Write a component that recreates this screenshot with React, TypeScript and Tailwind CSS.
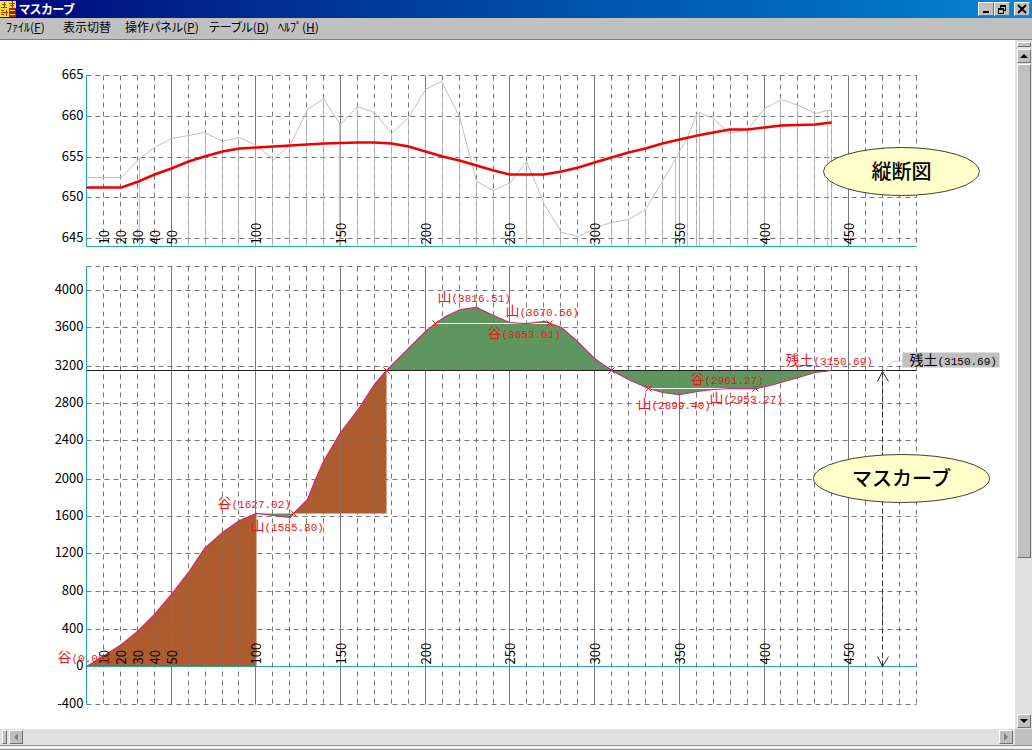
import type { ReactNode } from "react";

type Point = [number, number];

interface Mark {
    x: number;
    y: number;
    kanji: string;
    value: string;
}

const MENUS = [
    { label: "ﾌｧｲﾙ", accessKey: "F" },
    { label: "表示切替", accessKey: "" },
    { label: "操作パネル", accessKey: "P" },
    { label: "テーブル", accessKey: "D" },
    { label: "ﾍﾙﾌﾟ", accessKey: "H" },
];

// Plot area shared by both charts
const LEFT = 86;
const RIGHT = 916;
const PROFILE = { top: 75, bottom: 246 };
const MASS = { top: 266, bottom: 704, zero: 666 };

const stationX = (station: number) => Math.round(LEFT + (station * (RIGHT - LEFT)) / 490);

const STATIONS = Array.from({ length: 49 }, (_, i) => (i + 1) * 10);
const STATION_LABELS = [10, 20, 30, 40, 50, 100, 150, 200, 250, 300, 350, 400, 450];

const ELEVATIONS: Point[] = [[665, 75], [660, 116], [655, 157], [650, 197], [645, 238]];

const VOLUMES: Point[] = [
    [4000, 290], [3600, 327], [3200, 366], [2800, 403], [2400, 440], [2000, 479],
    [1600, 516], [1200, 553], [800, 591], [400, 629], [0, 666], [-400, 704],
];

const GROUND: Point[] = [
    [86, 177], [121, 177], [138, 159], [154, 147], [171, 138], [188, 135], [204, 132], [222, 141],
    [239, 137], [256, 145], [273, 159], [290, 144], [307, 109], [323, 98], [340, 124], [357, 106],
    [374, 112], [391, 133], [408, 117], [425, 89], [441, 81], [459, 116], [476, 181], [493, 190],
    [510, 182], [526, 161], [544, 204], [561, 232], [578, 236], [595, 227], [611, 222], [628, 219],
    [645, 209], [676, 157], [679, 151], [687, 137], [696, 114], [699, 112], [713, 118], [729, 133],
    [747, 129], [764, 108], [781, 99], [798, 105], [815, 113], [827, 110], [831, 110],
];

const PLANNED: Point[] = [
    [86, 187], [121, 187], [138, 181], [154, 174], [171, 168], [188, 161], [204, 156], [222, 151],
    [239, 148], [256, 147], [273, 146], [290, 145], [323, 143], [357, 142], [374, 142], [391, 143],
    [408, 146], [425, 151], [442, 156], [459, 160], [476, 165], [493, 170], [509, 174], [543, 174],
    [561, 171], [578, 167], [594, 162], [611, 157], [628, 152], [645, 148], [662, 143], [679, 139],
    [697, 135], [713, 132], [729, 129], [747, 129], [764, 127], [781, 125], [815, 124], [831, 122],
];

// The mass curve, split where the balance line changes
const CURVE_A: Point[] = [
    [86, 666], [104, 655], [121, 644], [137, 631], [154, 614], [171, 594], [188, 572], [204, 548],
    [222, 532], [239, 520], [256, 513],
];
const CURVE_B: Point[] = [[256, 513], [273, 515], [290, 517], [293, 513]];
const CURVE_C: Point[] = [
    [293, 513], [307, 499], [315, 479], [323, 461], [340, 432], [357, 410], [374, 384], [386, 370],
];
const CURVE_D: Point[] = [
    [386, 370], [408, 348], [425, 331], [435, 323], [445, 316], [460, 309], [476, 307], [493, 315],
    [509, 322], [526, 323], [544, 321], [550, 323], [561, 327], [577, 341], [594, 358], [611, 370],
];
const CURVE_E: Point[] = [
    [611, 370], [628, 379], [648, 388], [662, 392], [679, 394], [697, 391], [713, 389], [729, 388],
    [755, 388], [770, 385], [798, 377], [815, 372], [831, 370],
];

const MARKS: Mark[] = [
    { x: 57, y: 661, kanji: "谷", value: "(0.00)" },
    { x: 217, y: 507, kanji: "谷", value: "(1627.02)" },
    { x: 250, y: 530, kanji: "山", value: "(1585.80)" },
    { x: 437, y: 301, kanji: "山", value: "(3816.51)" },
    { x: 505, y: 315, kanji: "山", value: "(3670.56)" },
    { x: 487, y: 337, kanji: "谷", value: "(3653.01)" },
    { x: 637, y: 408, kanji: "山", value: "(2899.40)" },
    { x: 709, y: 402, kanji: "山", value: "(2953.27)" },
    { x: 690, y: 383, kanji: "谷", value: "(2961.27)" },
    { x: 785, y: 364, kanji: "残土", value: "(3150.69)" },
];

const CROSSES: Point[] = [[293, 513], [386, 370], [435, 323], [549, 323], [611, 370], [648, 388], [755, 388]];

const toPoints = (points: Point[]) => points.map((p) => p.join(",")).join(" ");

// Ground height at any x, used for the survey drop lines
const groundAt = (x: number) => {
    const i = Math.max(1, GROUND.findIndex((p) => p[0] >= x));
    const [x0, y0] = GROUND[i - 1];
    const [x1, y1] = GROUND[i];
    return y0 + ((y1 - y0) * (x - x0)) / (x1 - x0);
};

const DROPS = [...STATIONS.filter((s) => s >= 60 && s <= 440).map(stationX), 139, 339, 675, 687, 699, 827];

function Grid({ top, bottom, rows }: { top: number; bottom: number; rows: number[] }) {
    return (
        <g stroke="#787878" strokeWidth={1}>
            {rows.map((y) => (
                <line key={y} x1={LEFT} x2={RIGHT} y1={y} y2={y} strokeDasharray="5 4" />
            ))}
            {STATIONS.map((s) => (
                <line
                    key={s}
                    x1={stationX(s)}
                    x2={stationX(s)}
                    y1={top}
                    y2={bottom}
                    strokeDasharray={s % 50 === 0 ? undefined : "5 4"}
                />
            ))}
        </g>
    );
}

function StationLabels({ y }: { y: number }) {
    return (
        <g className="fill-black text-[13px]">
            {STATION_LABELS.map((s) => (
                <text key={s} transform={`translate(${stationX(s) + 5} ${y}) rotate(-90)`}>
                    {s}
                </text>
            ))}
        </g>
    );
}

function ScaleLabels({ rows }: { rows: Point[] }) {
    return (
        <g className="fill-black text-[13px]" textAnchor="end">
            {rows.map(([value, y]) => (
                <text key={value} x={83} y={y + 3}>
                    {value}
                </text>
            ))}
        </g>
    );
}

function Callout({ cx, cy, rx, ry, children }: { cx: number; cy: number; rx: number; ry: number; children: ReactNode }) {
    return (
        <g>
            <ellipse cx={cx} cy={cy} rx={rx} ry={ry} fill="#ffffcc" stroke="#404030" />
            <text x={cx} y={cy + 7} textAnchor="middle" className="fill-black text-[20px] font-medium">
                {children}
            </text>
        </g>
    );
}

function ProfileChart() {
    return (
        <g>
            <Grid top={PROFILE.top} bottom={PROFILE.bottom} rows={ELEVATIONS.map((e) => e[1])} />
            <g stroke="#b0b0b0" strokeOpacity={0.8}>
                {DROPS.map((x) => (
                    <line key={x} x1={x} x2={x} y1={groundAt(x)} y2={PROFILE.bottom} />
                ))}
            </g>
            <polyline points={toPoints(GROUND)} fill="none" stroke="#c0c0c0" />
            <path d={`M${LEFT} ${PROFILE.top}V${PROFILE.bottom}H${RIGHT}`} fill="none" stroke="#20a8a8" />
            <polyline points={toPoints(PLANNED)} fill="none" stroke="#f00000" strokeWidth={2.5} />
            <ScaleLabels rows={ELEVATIONS} />
            <StationLabels y={244} />
        </g>
    );
}

function MassChart() {
    const rows = [MASS.top, ...VOLUMES.map((v) => v[1])];
    const haul = `M${toPoints(CURVE_A)} 256,666Z M${toPoints(CURVE_C)} 386,513Z`;
    const balance = `M${toPoints(CURVE_B)}Z M${toPoints(CURVE_D)}Z M${toPoints(CURVE_E)}Z`;

    return (
        <g>
            <clipPath id="filled">
                <path d={`${haul} ${balance}`} />
            </clipPath>
            <Grid top={MASS.top} bottom={MASS.bottom} rows={rows} />
            <path d={haul} fill="#ac5d30" />
            <path d={balance} fill="#5f9660" />
            <g clipPath="url(#filled)" opacity={0.4}>
                <Grid top={MASS.top} bottom={MASS.bottom} rows={rows} />
            </g>
            <path d={`M${LEFT} ${MASS.top}V${MASS.bottom}M${LEFT} ${MASS.zero}H${RIGHT}`} fill="none" stroke="#20a8a8" />
            <path d={`M${LEFT} 370H${RIGHT}`} stroke="#202020" />
            <path d="M435 323H549M648 388H755" stroke="#ffffff" strokeWidth={1} />
            <polyline
                points={toPoints([...CURVE_A, ...CURVE_B, ...CURVE_C, ...CURVE_D, ...CURVE_E])}
                fill="none"
                stroke="#d02c70"
                strokeWidth={1.25}
            />
            <g stroke="#e02020" fill="none">
                {CROSSES.map(([x, y]) => (
                    <path key={x} d={`M${x - 3} ${y - 3}l6 6m0 -6l-6 6`} />
                ))}
            </g>
            <ScaleLabels rows={VOLUMES} />
            <StationLabels y={664} />
            <g className="fill-[#e81818]">
                {MARKS.map((m) => (
                    <ValueText key={`${m.x}-${m.y}`} {...m} />
                ))}
            </g>

            {/* Surplus soil, measured from the zero line */}
            <path d="M884 371L892 361L903 360" fill="none" stroke="#c8c8c8" />
            <rect x={902} y={352} width={97} height={15} fill="#c0c0c0" />
            <g className="fill-black">
                <ValueText x={909} y={364} kanji="残土" value="(3150.69)" />
            </g>
            <path d="M882 372V666" stroke="#303030" strokeWidth={1} strokeDasharray="5 3" />
            <path d="M877 381L882 371L888 381M877 656L882 666L888 656" fill="none" stroke="#303030" />
        </g>
    );
}

function ValueText({ x, y, kanji, value }: Mark) {
    return (
        <text x={x} y={y}>
            <tspan className="text-[14px]">{kanji}</tspan>
            <tspan className="font-['Liberation_Mono',monospace] text-[11px]">{value}</tspan>
        </text>
    );
}

const RAISED = "border border-t-white border-l-white border-r-[#707070] border-b-[#707070] bg-[#c0c0c0]";

function BevelButton({ label, className = "", children }: { label: string; className?: string; children: ReactNode }) {
    return (
        <button type="button" aria-label={label} className={`flex shrink-0 items-center justify-center ${RAISED} ${className}`}>
            {children}
        </button>
    );
}

function Arrow({ d, className = "fill-black" }: { d: string; className?: string }) {
    return (
        <svg width="8" height="8" viewBox="0 0 8 8" className={className}>
            <path d={d} />
        </svg>
    );
}

function AppIcon() {
    return (
        <svg width="16" height="16" viewBox="0 0 16 16" className="shrink-0" shapeRendering="crispEdges">
            <rect width="16" height="16" fill="#f8e820" />
            <rect x="9" y="7" width="7" height="9" fill="#b01818" />
            <path d="M2 3.5h4M4 1v6M1 6.5h6M1 9.5h3M1 11.5h3M1 13.5h3M6 9v6M4 11.5h4M9 2.5h6M12 0v7M10 4.5h4" stroke="#c02818" />
            <path d="M10 9.5h5M10 13.5h5" stroke="#f8e820" />
        </svg>
    );
}

export default function App() {
    return (
        <div className="flex min-h-screen flex-col bg-[#c0c0c0] font-['Noto_Sans_CJK_JP',sans-serif] text-black">
            <header className="flex h-[18px] items-center gap-[3px] bg-linear-to-r from-[#00007c] to-[#1084d0] pr-0.5">
                <AppIcon />
                <h1 className="flex-1 text-[12px] leading-[18px] font-bold text-white [font-feature-settings:'palt']">
                    マスカーブ
                </h1>
                <div className="flex">
                    <BevelButton label="最小化" className="h-[14px] w-4">
                        <svg width="10" height="10" viewBox="0 0 10 10">
                            <path d="M2 7h6v2h-6z" />
                        </svg>
                    </BevelButton>
                    <BevelButton label="元に戻す" className="h-[14px] w-4">
                        <svg width="10" height="10" viewBox="0 0 10 10" fill="none" stroke="#000" shapeRendering="crispEdges">
                            <path d="M3 1h6M3 2h6M3.5 1v3M8.5 1v5M7 6.5h2M1 4h6M1 5h6M1.5 4v5M6.5 4v5M1 9.5h6" />
                        </svg>
                    </BevelButton>
                    <BevelButton label="閉じる" className="ml-1 h-[14px] w-4">
                        <svg width="10" height="10" viewBox="0 0 10 10" stroke="#000" strokeWidth="2">
                            <path d="M1 1l8 8M9 1l-8 8" />
                        </svg>
                    </BevelButton>
                </div>
            </header>

            <nav className="grid h-[22px] grid-cols-[57px_62px_84px_69px_auto] justify-start border-b border-[#808080] pl-1.5 text-[12px] leading-[18px] [font-feature-settings:'palt']">
                {MENUS.map((menu) => (
                    <button key={menu.label} type="button" className="h-[18px] text-left whitespace-nowrap">
                        {menu.label}
                        {menu.accessKey && (
                            <>
                                (<span className="underline underline-offset-1">{menu.accessKey}</span>)
                            </>
                        )}
                    </button>
                ))}
            </nav>

            <div className="flex">
                <main className="min-w-0 flex-1 bg-white">
                    <svg viewBox="-0.5 39.5 1015 689" className="block h-auto w-full" role="img" aria-label="縦断図とマスカーブ">
                        <ProfileChart />
                        <MassChart />
                        <Callout cx={901} cy={171} rx={78} ry={24}>
                            縦断図
                        </Callout>
                        <Callout cx={901} cy={478} rx={88} ry={24}>
                            マスカーブ
                        </Callout>
                    </svg>
                </main>
                <div className="flex w-[17px] flex-col items-center bg-[#e0e0e0] pt-0.5 pb-px">
                    <div className={`mb-0.5 h-[5px] w-[14px] ${RAISED}`} />
                    <BevelButton label="上へ" className="h-[14px] w-[14px]">
                        <Arrow d="M4 2L8 6H0Z" />
                    </BevelButton>
                    <div className={`mt-px h-[494px] w-[14px] ${RAISED}`} />
                    <BevelButton label="下へ" className="mt-auto h-[14px] w-[14px]">
                        <Arrow d="M4 6L8 2H0Z" />
                    </BevelButton>
                </div>
            </div>

            <div className="flex h-4 bg-[#e0e0e0]">
                <div className="flex flex-1 items-center pr-0.5 pl-0.5">
                    <div className={`mr-0.5 h-[14px] w-[5px] ${RAISED}`} />
                    <BevelButton label="左へ" className="h-[14px] w-[14px]">
                        <Arrow d="M2 4L6 0V8Z" className="fill-[#808080]" />
                    </BevelButton>
                    <BevelButton label="右へ" className="ml-auto h-[14px] w-[14px]">
                        <Arrow d="M6 4L2 0V8Z" className="fill-[#808080]" />
                    </BevelButton>
                </div>
                <div className="w-[17px] bg-[#c0c0c0]" />
            </div>
            <footer className="h-[5px] border-y border-[#909090] bg-[#f0f0f0]" />
        </div>
    );
}
